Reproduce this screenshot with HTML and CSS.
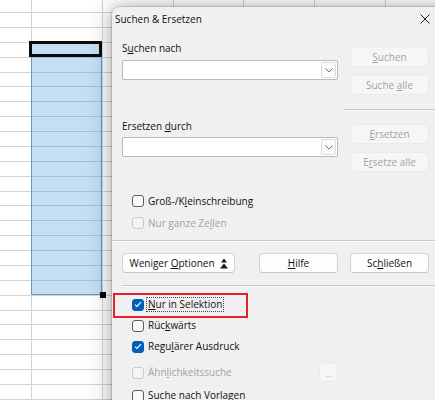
FILE: index.html
```html
<!DOCTYPE html>
<html lang="de">
<head>
<meta charset="utf-8">
<title>Suchen &amp; Ersetzen</title>
<link rel="stylesheet" href="styles.css">
</head>
<body>
  <!-- spreadsheet grid behind the dialog -->
  <div class="sheet">
    <div class="rows">
      <div class="row"></div><div class="row"></div><div class="row"></div><div class="row"></div>
      <div class="row"></div><div class="row"></div><div class="row"></div><div class="row"></div>
      <div class="row"></div><div class="row"></div><div class="row"></div><div class="row"></div>
      <div class="row"></div><div class="row"></div><div class="row"></div><div class="row"></div>
      <div class="row"></div><div class="row"></div><div class="row"></div><div class="row"></div>
      <div class="row"></div><div class="row"></div><div class="row"></div><div class="row"></div>
      <div class="row"></div><div class="row"></div><div class="row"></div><div class="row"></div>
    </div>
    <div class="cols">
      <div class="col col-first"></div>
      <div class="col"></div><div class="col"></div><div class="col"></div>
      <div class="col"></div><div class="col"></div><div class="col"></div>
    </div>
  </div>
  <div class="selection"></div>
  <div class="cell-cursor"></div>
  <div class="fill-handle"></div>

  <div class="dialog">
    <div class="titlebar">
      <span class="title">Suchen &amp; Ersetzen</span>
      <svg class="close" width="10" height="10" viewBox="0 0 10 10"><path d="M0.5 0.5L9.5 9.5M9.5 0.5L0.5 9.5" stroke="#1f1f1f" stroke-width="1"/></svg>
    </div>

    <div class="content">
      <div class="main-grid">
        <div class="left">
          <div class="label">S<u>u</u>chen nach</div>
          <div class="combo">
            <span class="combo-field"></span>
            <span class="combo-btn"><svg width="8" height="5" viewBox="0 0 8 5"><path d="M0.5 0.5L4 4L7.5 0.5" fill="none" stroke="#6e6e6e"/></svg></span>
          </div>
          <div class="label label-replace">Ersetzen <u>d</u>urch</div>
          <div class="combo combo-replace">
            <span class="combo-field"></span>
            <span class="combo-btn"><svg width="8" height="5" viewBox="0 0 8 5"><path d="M0.5 0.5L4 4L7.5 0.5" fill="none" stroke="#6e6e6e"/></svg></span>
          </div>
          <div class="checks">
            <div class="check"><span class="box"></span><span class="text">Groß-/K<u>l</u>einschreibung</span></div>
            <div class="check disabled"><span class="box"></span><span class="text">Nur ganze Ze<u>l</u>len</span></div>
          </div>
        </div>
        <div class="right">
          <button class="btn btn-first" disabled><span><u>S</u>uchen</span></button>
          <button class="btn btn-next" disabled><span>Suche <u>a</u>lle</span></button>
          <div class="sep sep-right"></div>
          <button class="btn btn-after-sep" disabled><span><u>E</u>rsetzen</span></button>
          <button class="btn btn-next" disabled><span>E<u>r</u>setze alle</span></button>
        </div>
      </div>

      <div class="sep sep-full"></div>

      <div class="actions">
        <div class="actions-left">
          <button class="btn btn-wide"><span>Weniger <u>O</u>ptionen</span>
            <svg width="8" height="11" viewBox="0 0 8 11"><path d="M4 0.5L7 4.5H1Z M4 5.5L8 10.5H0Z" fill="#1a1a1a"/></svg>
          </button>
          <button class="btn"><span><u>H</u>ilfe</span></button>
        </div>
        <div class="actions-right">
          <button class="btn"><span>Sc<u>h</u>ließen</span></button>
        </div>
      </div>

      <div class="sep sep-expander"></div>

      <div class="options">
        <div class="check checked"><span class="box"><svg width="8" height="7" viewBox="0 0 8 7"><path d="M1 3.6L3 5.5L7 1.2" fill="none" stroke="#fff" stroke-width="1.2"/></svg></span><span class="text focused"><u>N</u>ur in Selektion</span></div>
        <div class="check"><span class="box"></span><span class="text">Rüc<u>k</u>wärts</span></div>
        <div class="check checked"><span class="box"><svg width="8" height="7" viewBox="0 0 8 7"><path d="M1 3.6L3 5.5L7 1.2" fill="none" stroke="#fff" stroke-width="1.2"/></svg></span><span class="text">Regu<u>l</u>ärer Ausdruck</span></div>
        <div class="check-line">
          <div class="check disabled"><span class="box"></span><span class="text">Ähn<u>l</u>ichkeitssuche</span></div>
          <button class="btn btn-dots" disabled><span>...</span></button>
        </div>
        <div class="check check-last"><span class="box"></span><span class="text">Suche nach Vorlagen</span></div>
      </div>
    </div>

    <div class="annotation"></div>
  </div>
</body>
</html>
```

FILE: styles.css
```css
html, body {
  margin: 0;
  padding: 0;
}

body {
  width: 435px;
  height: 400px;
  overflow: hidden;
  position: relative;
  background: #ffffff;
  font-family: "Open Sans", "Noto Sans", sans-serif;
  font-size: 10px;
  color: #111111;
}

u {
  text-decoration-thickness: 1px;
  text-underline-offset: 1px;
}

/* ---------- spreadsheet ---------- */
.sheet {
  display: grid;
  width: 435px;
  height: 400px;
  overflow: hidden;
}

.rows, .cols {
  grid-area: 1 / 1;
}

.rows {
  display: grid;
  grid-template-rows: 13px repeat(27, 14.88px);
}

.row {
  box-sizing: border-box;
  border-bottom: 1px solid #d2d2d2;
}

.cols {
  display: flex;
}

.col {
  flex: 0 0 70.75px;
  box-sizing: border-box;
  border-right: 1px solid #d2d2d2;
}

.col-first {
  flex-basis: 32px;
}

.selection {
  position: absolute;
  left: 31px;
  top: 41px;
  width: 71px;
  height: 254px;
  box-sizing: border-box;
  background: rgba(62, 145, 212, 0.3);
  border: 1px solid #5a9bd6;
}

.cell-cursor {
  position: absolute;
  left: 29px;
  top: 41px;
  width: 73px;
  height: 16px;
  box-sizing: border-box;
  border: 3px solid #0c0c0c;
}

.fill-handle {
  position: absolute;
  left: 100px;
  top: 292px;
  width: 6px;
  height: 6px;
  background: #000;
}

/* ---------- dialog ---------- */
.dialog {
  position: absolute;
  left: 112px;
  top: 7px;
  width: 340px;
  height: 420px;
  background: #f0f0f0;
  border-radius: 8px 8px 0 0;
  box-shadow: 0 0 0 1px rgba(0, 0, 0, 0.1), 0 0 8px rgba(0, 0, 0, 0.14), 0 2px 26px rgba(0, 0, 0, 0.32);
}

.titlebar {
  height: 24px;
  display: flex;
  align-items: center;
  justify-content: space-between;
  padding: 0 22px 0 3px;
}

.title {
  line-height: 14px;
}

.content {
  padding: 10px 0 0 10px;
}

.main-grid,
.actions {
  display: grid;
  grid-template-columns: 216px 1fr;
  column-gap: 5px;
}

.label {
  line-height: 14px;
  height: 14px;
}

.label-replace {
  margin-top: 39px;
}

.combo {
  margin-top: 5px;
  height: 20px;
  box-sizing: border-box;
  display: flex;
  align-items: center;
  justify-content: space-between;
  background: #fff;
  border: 1px solid #b9b9b9;
  border-radius: 2px;
}

.combo-replace {
  margin-top: 4px;
}

.combo-btn {
  width: 15px;
  height: 16px;
  margin-right: 1px;
  box-sizing: border-box;
  border: 1px solid #dcdcdc;
  border-radius: 2px;
  background: #fbfbfb;
  display: flex;
  align-items: center;
  justify-content: center;
}

.checks {
  margin-top: 33px;
}

/* ---------- buttons ---------- */
.btn {
  width: 79px;
  height: 20px;
  box-sizing: border-box;
  padding: 0;
  display: flex;
  align-items: center;
  justify-content: center;
  gap: 5px;
  font-family: inherit;
  font-size: 10px;
  color: #111111;
  background: #fdfdfd;
  border: 1px solid #d2d2d2;
  border-bottom-color: #c4c4c4;
  border-radius: 4px;
}

.btn:disabled {
  color: #a3a3a3;
  background: #f6f6f6;
  border-color: #ebebeb;
}

.right .btn {
  margin-left: 7px;
}

.btn-first {
  margin-top: 6px;
}

.btn-next {
  margin-top: 8px;
}

.btn-after-sep {
  margin-top: 14px;
}

.btn-wide {
  width: 113px;
}

/* ---------- separators ---------- */
.sep {
  height: 1px;
  background: #c6c6c6;
  box-shadow: 0 1px 0 #fafafa;
}

.sep-right {
  margin-top: 14px;
}

.sep-full {
  margin: 6px 0 0 -10px;
}

.sep-expander {
  margin-top: 12px;
}

/* ---------- action row ---------- */
.actions {
  margin-top: 12px;
}

.actions-left {
  display: flex;
  justify-content: space-between;
}

.actions-right .btn {
  margin-left: 7px;
}

/* ---------- check boxes ---------- */
.options {
  margin-top: 8px;
}

.check {
  height: 22px;
  display: flex;
  align-items: center;
  padding-left: 10px;
}

.options .check {
  height: 21px;
}

.box {
  width: 12px;
  height: 12px;
  box-sizing: border-box;
  margin-right: 2px;
  border: 1px solid #5e5e5e;
  border-radius: 3px;
  background: #fafafa;
  display: flex;
  align-items: center;
  justify-content: center;
}

.checked .box {
  background: #005fb8;
  border-color: #005fb8;
}

.text {
  line-height: 13px;
  padding: 0 1px;
  border: 1px dotted transparent;
}

.text.focused {
  border-color: #4a4a4a;
}

.disabled .box {
  border-color: #cacaca;
  background: #f4f4f4;
}

.disabled .text {
  color: #a3a3a3;
}

.check-line {
  width: 216px;
  height: 23px;
  margin-top: 4px;
  display: flex;
  align-items: center;
  justify-content: space-between;
}

.btn-dots {
  width: 19px;
  height: 19px;
  align-items: flex-end;
  padding-bottom: 3px;
  font-size: 7px;
  line-height: 7px;
}

.options .check-last {
  margin-top: 1px;
}

/* ---------- highlight frame ---------- */
.annotation {
  position: absolute;
  left: 1px;
  top: 286px;
  width: 135px;
  height: 25px;
  box-sizing: border-box;
  border: 2px solid #e3202a;
}
```
